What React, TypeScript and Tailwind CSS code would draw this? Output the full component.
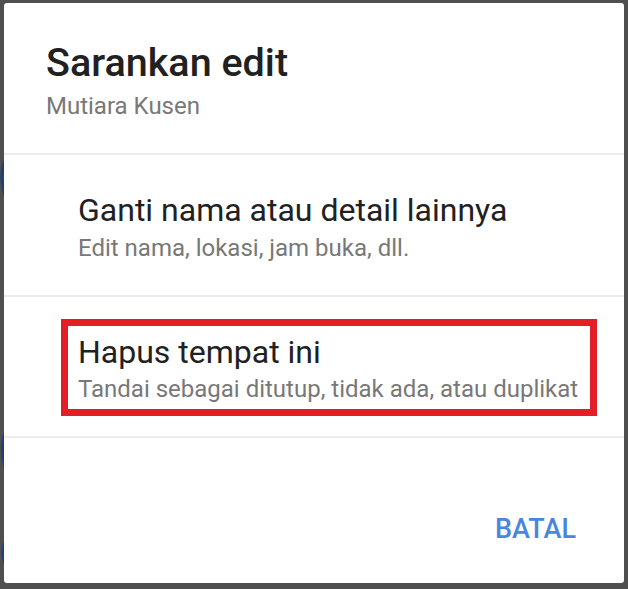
import React from 'react';

const options = [
  { title: 'Ganti nama atau detail lainnya', desc: 'Edit nama, lokasi, jam buka, dll.', marked: false },
  { title: 'Hapus tempat ini', desc: 'Tandai sebagai ditutup, tidak ada, atau duplikat', marked: true },
];

export default function App() {
  return (
    <div
      className="relative w-[628px] h-[589px] bg-[#4f4f4f] pt-[3px] pl-[4px] pr-[4px] pb-[6px] overflow-hidden"
      style={{ fontFamily: 'Roboto, "Noto Sans", sans-serif' }}
    >
      {/* bits of the map showing behind the dialog */}
      <svg className="absolute left-0 top-0" width="6" height="589" viewBox="0 0 6 589">
        <path d="M6 158 Q-2 175 6 198" stroke="#1f3f7a" strokeWidth="3" fill="none" />
        <path d="M6 430 Q-1 448 6 470" stroke="#1f3f7a" strokeWidth="3" fill="none" />
        <path d="M6 540 Q0 552 6 566" stroke="#1f3f7a" strokeWidth="3" fill="none" />
      </svg>

      <div className="relative h-full bg-white rounded-[3px] flex flex-col">
        <div className="h-[152px] pl-[42px] pt-[36px] border-b-2 border-[#ececec]">
          <h1 className="text-[39.5px] leading-[48px] font-medium text-[#212121]">Sarankan edit</h1>
          <p className="text-[24px] leading-[30px] mt-[4px] text-[#787878]">Mutiara Kusen</p>
        </div>

        {options.map((opt) =>
          opt.marked ? (
            <div key={opt.title} className="h-[141px] border-b-2 border-[#ececec] pl-[57px] pt-[22px]">
              <div className="w-[536px] h-[97px] border-[7px] border-[#e41e26] pl-[10px] pt-[7px]">
                <div className="text-[32px] leading-[38px] text-[#212121]">{opt.title}</div>
                <div className="text-[24px] leading-[30px] mt-[3px] text-[#787878]">{opt.desc}</div>
              </div>
            </div>
          ) : (
            <div key={opt.title} className="h-[142px] border-b-2 border-[#ececec] pl-[74px] pt-[36px]">
              <div className="text-[32px] leading-[38px] text-[#212121]">{opt.title}</div>
              <div className="text-[24px] leading-[30px] mt-[4px] text-[#787878]">{opt.desc}</div>
            </div>
          )
        )}

        <div className="flex-1 flex justify-end items-start pt-[75px] pr-[48px]">
          <button className="text-[27px] leading-[32px] font-medium text-[#4a86e0]">BATAL</button>
        </div>
      </div>
    </div>
  );
}
